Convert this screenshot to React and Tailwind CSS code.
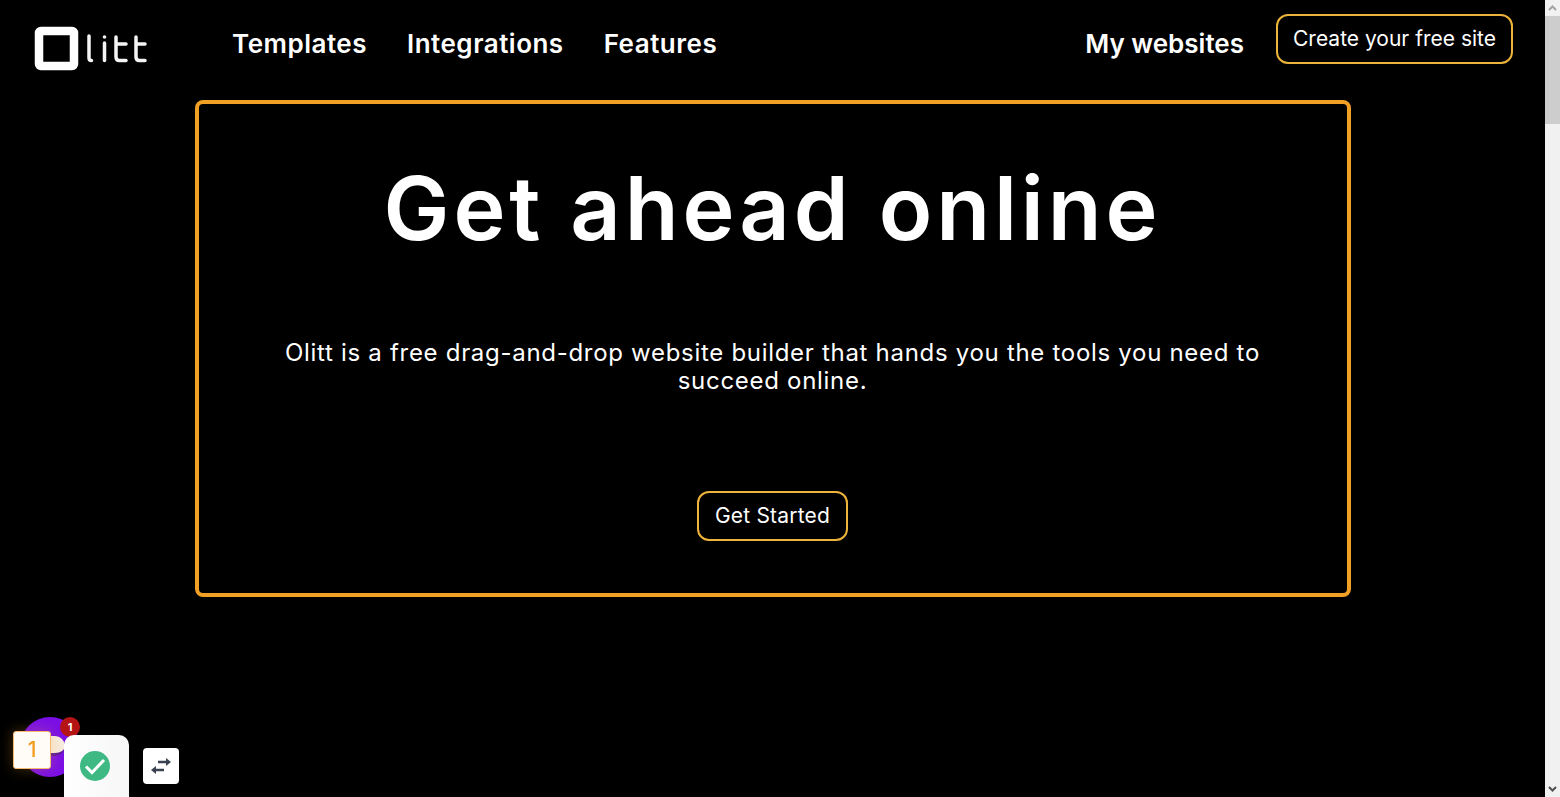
function Logo() {
  return (
    <svg width="113" height="46" viewBox="0 0 113 46" fill="none">
      <rect x="5" y="5" width="35" height="35" rx="2" stroke="#fff" strokeWidth="8.5" />
      <g stroke="#f4f4f4" strokeWidth="3.5" strokeLinecap="round" fill="none">
        <path d="M55 10v22q0 2.500 2.500 2.500" />
        <path d="M70.500 17v17.500" />
        <path d="M82 11v20q0 3.500 3.500 3.500h6.500M82 18h10" />
        <path d="M102 11v20q0 3.500 3.500 3.500h5.500M102 18h9" />
      </g>
      <circle cx="70.500" cy="11" r="1.800" fill="#f4f4f4" />
    </svg>
  );
}

function Widgets() {
  return (
    <div className="fixed left-0 bottom-0">
      <div className="absolute left-[20px] bottom-[20px] w-[60px] h-[60px] rounded-full bg-[#7a0fe6] overflow-hidden">
        <div className="absolute left-[20px] top-[19px] w-[25px] h-[20px] rounded-b-full rounded-tr-full bg-[#f7ecdf] border-b-[3px] border-[#5b1a9a]" />
      </div>
      <div className="absolute left-[60px] bottom-[60px] w-[20px] h-[20px] rounded-full bg-[#b51414] text-white text-[11px] font-bold flex items-center justify-center">
        1
      </div>
      <div className="absolute left-[13px] bottom-[28px] w-[38px] h-[38px] rounded-[3px] bg-[#fffcf8] border border-[#f5b971] shadow-[0_0_14px_rgba(243,156,31,0.3)] text-[#f39c1f] text-[21px] font-medium flex items-center justify-center">
        1
      </div>
      <div className="absolute left-[64px] bottom-0 w-[65px] h-[62px] rounded-t-[10px] bg-linear-to-r from-white to-[#f6f6f6] flex items-start justify-center pt-[16px] pr-[4px]">
        <svg width="30" height="30" viewBox="0 0 30 30">
          <circle cx="15" cy="15" r="15" fill="#3fb984" />
          <path d="M6 15.500l6 6L24 9" stroke="#fff" strokeWidth="3" fill="none" />
        </svg>
      </div>
      <div className="absolute left-[143px] bottom-[13px] w-[36px] h-[36px] rounded-[4px] bg-white flex items-center justify-center">
        <svg width="22" height="18" viewBox="0 0 22 18" fill="none">
          <path d="M8 5h10" stroke="#3a4150" strokeWidth="2.500" />
          <path d="M16 1l5 4-5 4z" fill="#3a4150" />
          <path d="M14 13H4" stroke="#3a4150" strokeWidth="2.500" />
          <path d="M6 9l-5 4 5 4z" fill="#3a4150" />
        </svg>
      </div>
    </div>
  );
}

export default function App() {
  return (
    <div className="h-[797px] overflow-hidden flex bg-black text-white font-['Inter',sans-serif]">
      <div className="flex-1 min-w-0">
        <header className="h-[100px] flex items-start pl-[34px] pr-[32px]">
          <div className="mt-[26px]">
            <Logo />
          </div>
          <nav className="ml-[85px] mt-[27px] flex gap-[40px] text-[26px] leading-[34px] font-semibold tracking-[0.5px]">
            <a>Templates</a>
            <a>Integrations</a>
            <a>Features</a>
          </nav>
          <a className="ml-auto mt-[27px] text-[26px] leading-[34px] font-semibold">My websites</a>
          <a className="ml-[32px] mt-[14px] h-[50px] w-[237px] flex items-center justify-center rounded-[12px] border-2 border-[#edb43c] text-[21px]">
            Create your free site
          </a>
        </header>
        <main className="mx-auto w-[1156px] h-[497px] border-[4px] border-[#f0a024] rounded-[8px] flex flex-col items-center">
          <h1 className="mt-[52px] text-[88px] leading-[104px] font-semibold tracking-[3.9px]">Get ahead online</h1>
          <p className="mt-[79px] w-[1000px] text-center text-[24px] leading-[28px] tracking-[0.7px]">
            Olitt is a free drag-and-drop website builder that hands you the tools you need to succeed online.
          </p>
          <a className="mt-[96px] h-[50px] w-[151px] flex items-center justify-center rounded-[12px] border-2 border-[#edb43c] text-[21px] tracking-[0.2px]">
            Get Started
          </a>
        </main>
      </div>
      <div className="w-[15px] shrink-0 bg-[#f1f1f1] flex flex-col items-center">
        <svg className="mt-[5px]" width="9" height="6" viewBox="0 0 9 6" fill="none" stroke="#a3a3a3" strokeWidth="2"><path d="M1 5l3.500-3.500L8 5" /></svg>
        <div className="mt-[5px] w-full h-[108px] bg-[#cdcdcd]" />
        <svg className="mt-auto mb-[5px]" width="9" height="6" viewBox="0 0 9 6" fill="none" stroke="#505050" strokeWidth="2"><path d="M1 1l3.500 3.500L8 1" /></svg>
      </div>
      <Widgets />
    </div>
  );
}
